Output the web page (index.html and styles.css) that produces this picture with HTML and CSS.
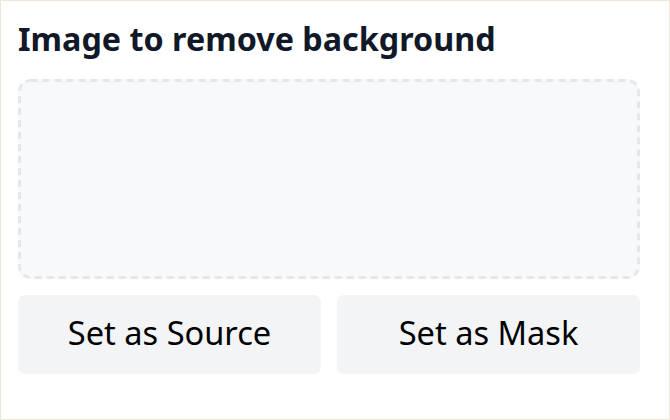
FILE: index.html
```html
<!DOCTYPE html>
<html>
<head>
<meta charset="utf-8">
<link rel="stylesheet" href="styles.css">
</head>
<body>
<div class="frame">
  <div class="panel">
    <h2 class="title">Image to remove background</h2>
    <div class="dropzone"></div>
    <div class="actions">
      <button class="btn">Set as Source</button>
      <button class="btn">Set as Mask</button>
    </div>
  </div>
</div>
</body>
</html>
```
FILE: styles.css
```css
html, body {
  margin: 0;
  padding: 0;
  background: #ffffff;
}
.frame {
  box-sizing: border-box;
  width: 670px;
  height: 420px;
  border: 1px solid #efe7d3;
  padding: 17px 29px 0 17px;
}
.panel {
  display: flex;
  flex-direction: column;
}
.title {
  margin: 0;
  font-family: "Noto Sans", sans-serif;
  font-weight: 700;
  font-size: 32.3px;
  line-height: 40px;
  color: #111827;
}
.dropzone {
  margin-top: 21px;
  box-sizing: border-box;
  height: 200px;
  border-radius: 12px;
  background-color: #f8f9fb;
  background-image: url("data:image/svg+xml,%3Csvg xmlns='http://www.w3.org/2000/svg' width='622' height='200'%3E%3Crect x='1.5' y='1.5' width='619' height='197' rx='11' ry='11' fill='none' stroke='%23e5e7eb' stroke-width='3' stroke-dasharray='7 5'/%3E%3C/svg%3E");
  background-repeat: no-repeat;
}
.actions {
  margin-top: 16px;
  display: grid;
  grid-template-columns: 1fr 1fr;
  gap: 16px;
}
.btn {
  height: 79px;
  border: none;
  border-radius: 7px;
  background: #f3f4f6;
  font-family: "Noto Sans", sans-serif;
  font-size: 32.6px;
  color: #000000;
  padding: 0 0 4px 0;
}
```
